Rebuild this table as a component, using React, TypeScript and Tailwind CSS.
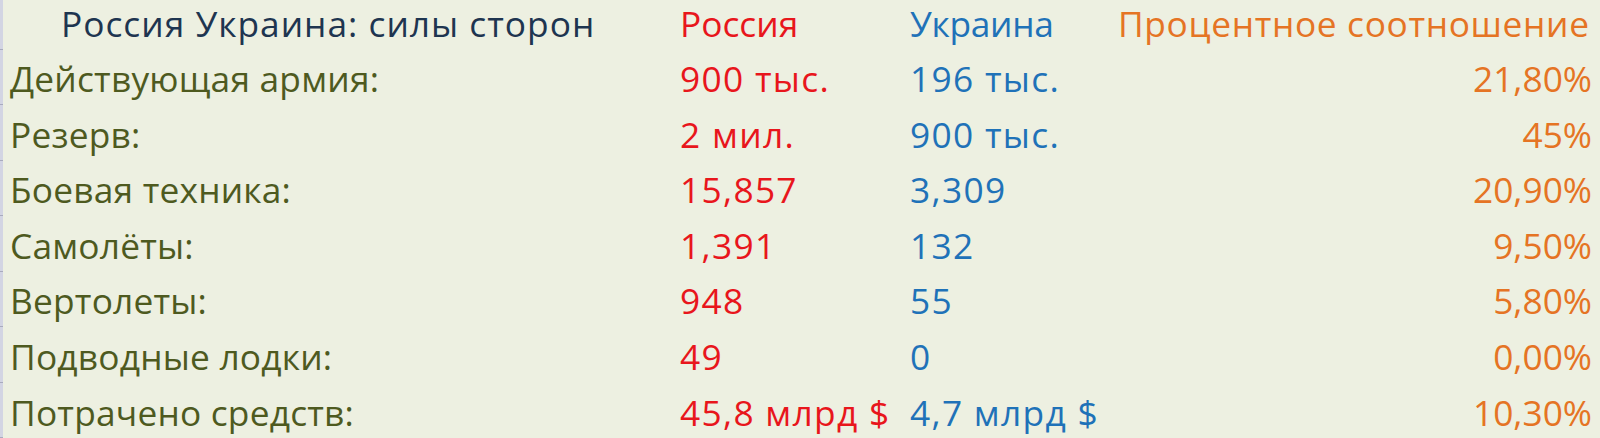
import React from "react";

const rows = [
  ["Действующая армия:", "900 тыс.", "196 тыс.", "21,80%"],
  ["Резерв:", "2 мил.", "900 тыс.", "45%"],
  ["Боевая техника:", "15,857", "3,309", "20,90%"],
  ["Самолёты:", "1,391", "132", "9,50%"],
  ["Вертолеты:", "948", "55", "5,80%"],
  ["Подводные лодки:", "49", "0", "0,00%"],
  ["Потрачено средств:", "45,8 млрд $", "4,7 млрд $", "10,30%"],
];

export default function App() {
  return (
    <div className="w-[1600px] h-[438px] overflow-hidden bg-[#edf0e1] flex font-['Open_Sans','Liberation_Sans',sans-serif]">
      <div className="w-[3px] h-full bg-[#d3d5e3] flex flex-col shrink-0">
        <div className="h-[50px] border-b border-[#a9abbe]" />
        {rows.map((r) => (
          <div key={r[0]} className="h-[55.6px] border-b border-[#a9abbe]" />
        ))}
      </div>
      <div className="flex-1 flex flex-col text-[35.3px] leading-[55.6px] -mt-[4.5px]">
        <div className="flex h-[55.6px]">
          <div className="w-[677px] shrink-0 pl-[58px] tracking-[1px] text-[#1e3550] whitespace-nowrap">Россия Украина: силы сторон</div>
          <div className="w-[230px] shrink-0 text-[#e8161c] whitespace-nowrap">Россия</div>
          <div className="w-[208px] shrink-0 tracking-[-0.3px] text-[#1f72b8] whitespace-nowrap">Украина</div>
          <div className="flex-1 tracking-[0.65px] text-[#e57424] whitespace-nowrap">Процентное соотношение</div>
        </div>
        {rows.map((r) => (
          <div key={r[0]} className="flex h-[55.6px]">
            <div className="w-[677px] shrink-0 pl-[7px] tracking-[0.2px] text-[#4e5a1f] whitespace-nowrap">{r[0]}</div>
            <div className="w-[230px] shrink-0 tracking-[1.3px] text-[#e8161c] whitespace-nowrap">{r[1]}</div>
            <div className="w-[208px] shrink-0 tracking-[1.3px] text-[#1f72b8] whitespace-nowrap">{r[2]}</div>
            <div className="flex-1 pr-[8px] text-right text-[#e57424] whitespace-nowrap">{r[3]}</div>
          </div>
        ))}
      </div>
    </div>
  );
}
